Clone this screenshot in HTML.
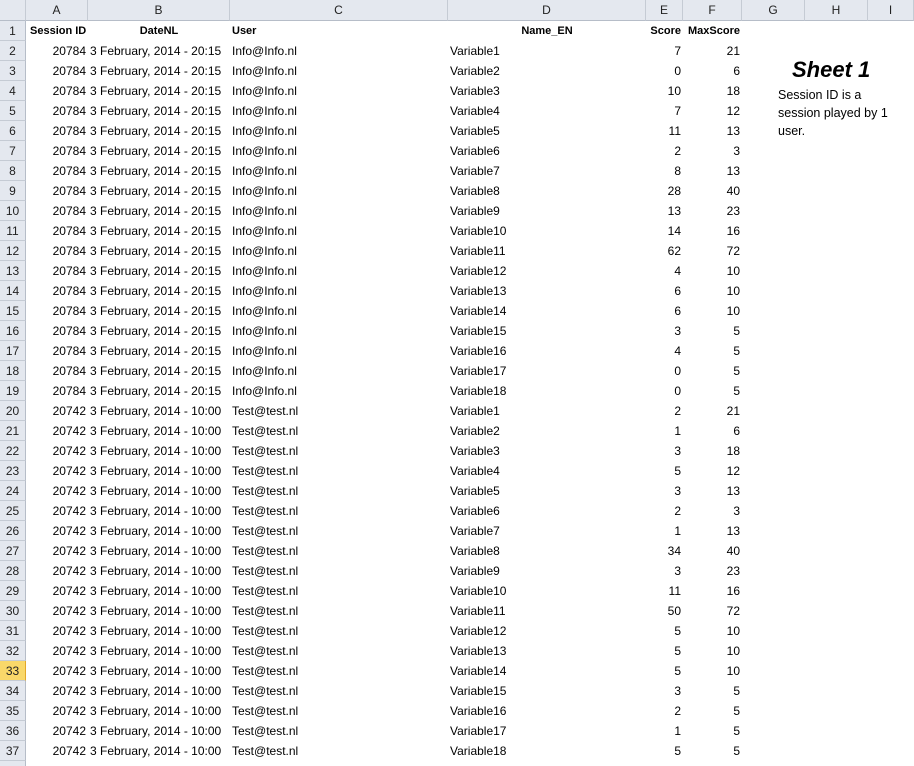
<!DOCTYPE html>
<html><head><meta charset="utf-8"><style>
html,body{margin:0;padding:0;background:#fff;width:914px;height:766px;overflow:hidden}
body{font-family:"Liberation Sans",sans-serif;font-size:12px;color:#000;position:relative}
.row{display:flex;height:20px;line-height:20px}
.row>div{box-sizing:border-box;height:20px;padding:0 2px;white-space:nowrap;overflow:hidden;flex:none}
.row>div:nth-child(1){width:26px}.row>div:nth-child(2){width:62px}.row>div:nth-child(3){width:142px}
.row>div:nth-child(4){width:218px}.row>div:nth-child(5){width:198px}.row>div:nth-child(6){width:37px}
.row>div:nth-child(7){width:59px}.row>div:nth-child(8){width:63px}.row>div:nth-child(9){width:63px}.row>div:nth-child(10){width:46px}
.row.h{height:21px}
.row.h>div{height:21px;background:#e4e8ef;border-right:1px solid #c5cbd4;border-bottom:1px solid #b6bdc8;text-align:center;color:#222;padding:0;line-height:20px}
.row>div.rh{background:#e4e8ef;border-right:1px solid #b6bdc8;border-bottom:1px solid #c5cbd4;text-align:center;color:#222;padding:0}
.row>div.sel{background:#f9d86a;border-right:1px solid #e3a829}
.r{text-align:right}.c{text-align:center}
.row>div.b{font-weight:bold;font-size:11px;overflow:visible}
#note{position:absolute;left:778px;top:56px;font-size:12.5px;line-height:18px}
#note .t{font-weight:bold;font-style:italic;font-size:22px;margin-left:14px;line-height:28px;margin-bottom:2px}
</style></head><body>
<div class="row h"><div></div><div>A</div><div>B</div><div>C</div><div>D</div><div>E</div><div>F</div><div>G</div><div>H</div><div>I</div></div>
<div class="row"><div class="rh">1</div><div class="b" style="padding-left:4px">Session ID</div><div class="b c">DateNL</div><div class="b">User</div><div class="b c">Name_EN</div><div class="b r">Score</div><div class="b r">MaxScore</div></div>
<div class="row"><div class="rh">2</div><div class="r">20784</div><div>3 February, 2014 - 20:15</div><div>Info@Info.nl</div><div>Variable1</div><div class="r">7</div><div class="r">21</div></div>
<div class="row"><div class="rh">3</div><div class="r">20784</div><div>3 February, 2014 - 20:15</div><div>Info@Info.nl</div><div>Variable2</div><div class="r">0</div><div class="r">6</div></div>
<div class="row"><div class="rh">4</div><div class="r">20784</div><div>3 February, 2014 - 20:15</div><div>Info@Info.nl</div><div>Variable3</div><div class="r">10</div><div class="r">18</div></div>
<div class="row"><div class="rh">5</div><div class="r">20784</div><div>3 February, 2014 - 20:15</div><div>Info@Info.nl</div><div>Variable4</div><div class="r">7</div><div class="r">12</div></div>
<div class="row"><div class="rh">6</div><div class="r">20784</div><div>3 February, 2014 - 20:15</div><div>Info@Info.nl</div><div>Variable5</div><div class="r">11</div><div class="r">13</div></div>
<div class="row"><div class="rh">7</div><div class="r">20784</div><div>3 February, 2014 - 20:15</div><div>Info@Info.nl</div><div>Variable6</div><div class="r">2</div><div class="r">3</div></div>
<div class="row"><div class="rh">8</div><div class="r">20784</div><div>3 February, 2014 - 20:15</div><div>Info@Info.nl</div><div>Variable7</div><div class="r">8</div><div class="r">13</div></div>
<div class="row"><div class="rh">9</div><div class="r">20784</div><div>3 February, 2014 - 20:15</div><div>Info@Info.nl</div><div>Variable8</div><div class="r">28</div><div class="r">40</div></div>
<div class="row"><div class="rh">10</div><div class="r">20784</div><div>3 February, 2014 - 20:15</div><div>Info@Info.nl</div><div>Variable9</div><div class="r">13</div><div class="r">23</div></div>
<div class="row"><div class="rh">11</div><div class="r">20784</div><div>3 February, 2014 - 20:15</div><div>Info@Info.nl</div><div>Variable10</div><div class="r">14</div><div class="r">16</div></div>
<div class="row"><div class="rh">12</div><div class="r">20784</div><div>3 February, 2014 - 20:15</div><div>Info@Info.nl</div><div>Variable11</div><div class="r">62</div><div class="r">72</div></div>
<div class="row"><div class="rh">13</div><div class="r">20784</div><div>3 February, 2014 - 20:15</div><div>Info@Info.nl</div><div>Variable12</div><div class="r">4</div><div class="r">10</div></div>
<div class="row"><div class="rh">14</div><div class="r">20784</div><div>3 February, 2014 - 20:15</div><div>Info@Info.nl</div><div>Variable13</div><div class="r">6</div><div class="r">10</div></div>
<div class="row"><div class="rh">15</div><div class="r">20784</div><div>3 February, 2014 - 20:15</div><div>Info@Info.nl</div><div>Variable14</div><div class="r">6</div><div class="r">10</div></div>
<div class="row"><div class="rh">16</div><div class="r">20784</div><div>3 February, 2014 - 20:15</div><div>Info@Info.nl</div><div>Variable15</div><div class="r">3</div><div class="r">5</div></div>
<div class="row"><div class="rh">17</div><div class="r">20784</div><div>3 February, 2014 - 20:15</div><div>Info@Info.nl</div><div>Variable16</div><div class="r">4</div><div class="r">5</div></div>
<div class="row"><div class="rh">18</div><div class="r">20784</div><div>3 February, 2014 - 20:15</div><div>Info@Info.nl</div><div>Variable17</div><div class="r">0</div><div class="r">5</div></div>
<div class="row"><div class="rh">19</div><div class="r">20784</div><div>3 February, 2014 - 20:15</div><div>Info@Info.nl</div><div>Variable18</div><div class="r">0</div><div class="r">5</div></div>
<div class="row"><div class="rh">20</div><div class="r">20742</div><div>3 February, 2014 - 10:00</div><div>Test@test.nl</div><div>Variable1</div><div class="r">2</div><div class="r">21</div></div>
<div class="row"><div class="rh">21</div><div class="r">20742</div><div>3 February, 2014 - 10:00</div><div>Test@test.nl</div><div>Variable2</div><div class="r">1</div><div class="r">6</div></div>
<div class="row"><div class="rh">22</div><div class="r">20742</div><div>3 February, 2014 - 10:00</div><div>Test@test.nl</div><div>Variable3</div><div class="r">3</div><div class="r">18</div></div>
<div class="row"><div class="rh">23</div><div class="r">20742</div><div>3 February, 2014 - 10:00</div><div>Test@test.nl</div><div>Variable4</div><div class="r">5</div><div class="r">12</div></div>
<div class="row"><div class="rh">24</div><div class="r">20742</div><div>3 February, 2014 - 10:00</div><div>Test@test.nl</div><div>Variable5</div><div class="r">3</div><div class="r">13</div></div>
<div class="row"><div class="rh">25</div><div class="r">20742</div><div>3 February, 2014 - 10:00</div><div>Test@test.nl</div><div>Variable6</div><div class="r">2</div><div class="r">3</div></div>
<div class="row"><div class="rh">26</div><div class="r">20742</div><div>3 February, 2014 - 10:00</div><div>Test@test.nl</div><div>Variable7</div><div class="r">1</div><div class="r">13</div></div>
<div class="row"><div class="rh">27</div><div class="r">20742</div><div>3 February, 2014 - 10:00</div><div>Test@test.nl</div><div>Variable8</div><div class="r">34</div><div class="r">40</div></div>
<div class="row"><div class="rh">28</div><div class="r">20742</div><div>3 February, 2014 - 10:00</div><div>Test@test.nl</div><div>Variable9</div><div class="r">3</div><div class="r">23</div></div>
<div class="row"><div class="rh">29</div><div class="r">20742</div><div>3 February, 2014 - 10:00</div><div>Test@test.nl</div><div>Variable10</div><div class="r">11</div><div class="r">16</div></div>
<div class="row"><div class="rh">30</div><div class="r">20742</div><div>3 February, 2014 - 10:00</div><div>Test@test.nl</div><div>Variable11</div><div class="r">50</div><div class="r">72</div></div>
<div class="row"><div class="rh">31</div><div class="r">20742</div><div>3 February, 2014 - 10:00</div><div>Test@test.nl</div><div>Variable12</div><div class="r">5</div><div class="r">10</div></div>
<div class="row"><div class="rh">32</div><div class="r">20742</div><div>3 February, 2014 - 10:00</div><div>Test@test.nl</div><div>Variable13</div><div class="r">5</div><div class="r">10</div></div>
<div class="row"><div class="rh sel">33</div><div class="r">20742</div><div>3 February, 2014 - 10:00</div><div>Test@test.nl</div><div>Variable14</div><div class="r">5</div><div class="r">10</div></div>
<div class="row"><div class="rh">34</div><div class="r">20742</div><div>3 February, 2014 - 10:00</div><div>Test@test.nl</div><div>Variable15</div><div class="r">3</div><div class="r">5</div></div>
<div class="row"><div class="rh">35</div><div class="r">20742</div><div>3 February, 2014 - 10:00</div><div>Test@test.nl</div><div>Variable16</div><div class="r">2</div><div class="r">5</div></div>
<div class="row"><div class="rh">36</div><div class="r">20742</div><div>3 February, 2014 - 10:00</div><div>Test@test.nl</div><div>Variable17</div><div class="r">1</div><div class="r">5</div></div>
<div class="row"><div class="rh">37</div><div class="r">20742</div><div>3 February, 2014 - 10:00</div><div>Test@test.nl</div><div>Variable18</div><div class="r">5</div><div class="r">5</div></div>
<div class="row"><div class="rh"></div></div>
<div id="note"><div class="t">Sheet 1</div>Session ID is a<br>session played by 1<br>user.</div>
</body></html>
